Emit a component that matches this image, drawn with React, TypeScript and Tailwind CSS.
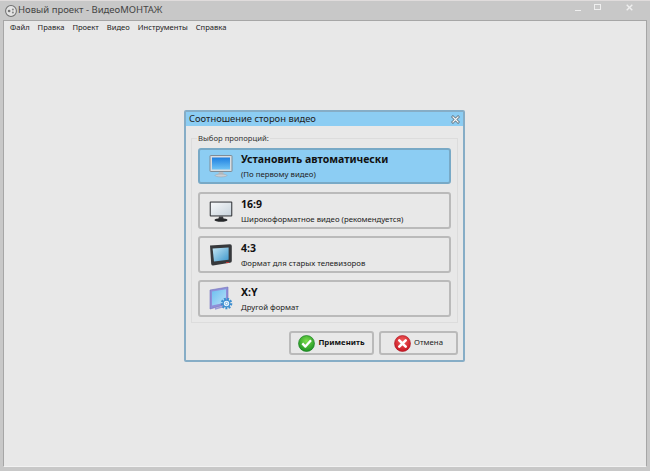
import React from "react";

const FONT = "font-['Liberation_Sans',Arial,sans-serif]";
const UI = "font-['Noto_Sans',sans-serif]";

function AppLogo() {
  return (
    <svg width="12" height="12" viewBox="0 0 14 14" className="shrink-0">
      <circle cx="7" cy="7" r="6.3" fill="#e4e4e4" stroke="#6f6f6f" strokeWidth="1.2" />
      <circle cx="4.8" cy="7" r="1.6" fill="#777" />
      <circle cx="9.2" cy="5.2" r="1.2" fill="#888" />
      <circle cx="9.2" cy="8.8" r="1.2" fill="#888" />
    </svg>
  );
}

function MonitorBlue() {
  return (
    <svg width="24" height="24" viewBox="0 0 24 24">
      <defs>
        <linearGradient id="mb" x1="0" y1="0" x2="0" y2="1">
          <stop offset="0" stopColor="#1e7fe0" />
          <stop offset="1" stopColor="#6fc4f6" />
        </linearGradient>
      </defs>
      <rect x="1" y="1.5" width="22" height="16" rx="0.5" fill="#d8dde2" stroke="#7f8c96" />
      <rect x="3" y="3.5" width="18" height="12" fill="url(#mb)" />
      <path d="M10 18h4l1 2.5H9z" fill="#b5bcc2" />
      <ellipse cx="12" cy="21.5" rx="6" ry="1.4" fill="#c9ced3" stroke="#98a1a8" strokeWidth="0.5" />
    </svg>
  );
}

function MonitorWide() {
  return (
    <svg width="24" height="24" viewBox="0 0 24 24">
      <defs>
        <linearGradient id="mw" x1="0" y1="0" x2="1" y2="1">
          <stop offset="0" stopColor="#f6f8fa" />
          <stop offset="1" stopColor="#c8d3dc" />
        </linearGradient>
      </defs>
      <rect x="0.7" y="2.5" width="22.6" height="15" rx="1" fill="#3a3c40" />
      <rect x="1.8" y="3.6" width="20.4" height="12.8" fill="url(#mw)" />
      <path d="M10 17.5h4l.6 2.5H9.4z" fill="#3a3c40" />
      <ellipse cx="12" cy="21" rx="6.5" ry="1.7" fill="#26282b" />
    </svg>
  );
}

function OldTv() {
  return (
    <svg width="24" height="24" viewBox="0 0 24 24">
      <defs>
        <linearGradient id="tv" x1="0" y1="0" x2="1" y2="1">
          <stop offset="0" stopColor="#c5e6f4" />
          <stop offset="1" stopColor="#3d97cc" />
        </linearGradient>
      </defs>
      <path d="M1 2.5 21 1.2q1.8 0 1.8 1.8v15q0 1.6-1.8 1.8L4 22.5q-1.5 0-1.8-1.5z" fill="#37393c" />
      <path d="M3.6 5.4 19.6 4.4v12.4L5 18.6z" fill="url(#tv)" />
      <rect x="17" y="19" width="3" height="1" fill="#b33" />
    </svg>
  );
}

function FormatCustom() {
  return (
    <svg width="24" height="26" viewBox="0 0 24 26">
      <defs>
        <linearGradient id="fc" x1="0" y1="0" x2="1" y2="1">
          <stop offset="0" stopColor="#6cc0f0" />
          <stop offset="1" stopColor="#b8e0f8" />
        </linearGradient>
      </defs>
      <path d="M1 4 19 1v17L1 23z" fill="#8f8fd8" stroke="#7272bc" strokeWidth="0.6" />
      <path d="M3 5.6 17 3.2v13.2L3 19.6z" fill="url(#fc)" />
      <path d="M6 22l8-2v1.5l-8 2.3z" fill="#9a9ad8" />
      <circle cx="17.5" cy="17.5" r="4.6" fill="none" stroke="#3d8fd0" strokeWidth="2.4" strokeDasharray="1.9 1.2" />
      <circle cx="17.5" cy="17.5" r="3.3" fill="#e8f4fc" stroke="#3d8fd0" strokeWidth="1.2" />
      <circle cx="17.5" cy="17.5" r="1.2" fill="#fff" stroke="#3d8fd0" strokeWidth="0.6" />
    </svg>
  );
}

function ApplyIcon() {
  return (
    <svg width="17" height="17" viewBox="0 0 17 17">
      <defs>
        <radialGradient id="ok" cx="0.5" cy="0.35" r="0.7">
          <stop offset="0" stopColor="#7ee04e" />
          <stop offset="1" stopColor="#148a1e" />
        </radialGradient>
      </defs>
      <circle cx="8.5" cy="8.5" r="8" fill="url(#ok)" stroke="#0e7a1a" strokeWidth="0.6" />
      <path d="M4.3 8.4 7.4 11.6 13 5.2" fill="none" stroke="#fff" strokeWidth="2.3" strokeLinejoin="round" />
    </svg>
  );
}

function CancelIcon() {
  return (
    <svg width="17" height="17" viewBox="0 0 17 17">
      <defs>
        <radialGradient id="no" cx="0.5" cy="0.35" r="0.7">
          <stop offset="0" stopColor="#f4605e" />
          <stop offset="1" stopColor="#c20f1c" />
        </radialGradient>
      </defs>
      <circle cx="8.5" cy="8.5" r="8" fill="url(#no)" stroke="#ac1220" strokeWidth="0.6" />
      <path d="M5.3 5.3 11.7 11.7M11.7 5.3 5.3 11.7" stroke="#fff" strokeWidth="2.6" strokeLinecap="round" />
    </svg>
  );
}

type Option = {
  title: string;
  note: string;
  icon: React.ReactNode;
  active?: boolean;
  height: string;
  gap: string;
};

const OPTIONS: Option[] = [
  {
    title: "Установить автоматически",
    note: "(По первому видео)",
    icon: <MonitorBlue />,
    active: true,
    height: "h-[36px]",
    gap: "",
  },
  { title: "16:9", note: "Широкоформатное видео (рекомендуется)", icon: <MonitorWide />, height: "h-[37px]", gap: "mt-[8px]" },
  { title: "4:3", note: "Формат для старых телевизоров", icon: <OldTv />, height: "h-[37px]", gap: "mt-[7px]" },
  { title: "X:Y", note: "Другой формат", icon: <FormatCustom />, height: "h-[37px]", gap: "mt-[7px]" },
];

function OptionRow({ option }: { option: Option }) {
  return (
    <div
      className={`flex items-center rounded-[3px] border-2 pl-[9px] ${option.height} ${option.gap} ${
        option.active ? "border-[#78a9c6] bg-[#8ccdf3]" : "border-[#bababa] bg-[#e8e8e8]"
      }`}
    >
      <div className="flex w-[24px] shrink-0 justify-center">{option.icon}</div>
      <div className="ml-[8px] flex flex-col text-[#111]">
        <span className={`${UI} text-[10.5px] font-bold leading-[14px]`}>{option.title}</span>
        <span className={`${UI} mt-[3px] text-[7.8px] leading-[11px] text-[#222]`}>{option.note}</span>
      </div>
    </div>
  );
}

export default function App() {
  return (
    <div className={`${FONT} relative flex h-[471px] w-[650px] flex-col overflow-hidden bg-[#c8c8c8]`}>
      <div className="flex h-[20px] shrink-0 items-center justify-between border-t border-[#e0dcdc] pl-[5px] pr-[17px]">
        <div className="flex items-center gap-[1px]">
          <AppLogo />
          <span className={`${UI} text-[9.5px] text-[#444]`}>Новый проект - ВидеоМОНТАЖ</span>
        </div>
        <div className="flex items-start gap-[13px] pb-[6px]">
          <div className="mt-[6px] h-[1px] w-[6px] bg-[#f0f0f0]" />
          <div className="h-[6px] w-[7px] border border-[#efefef]" />
          <svg width="7" height="7" viewBox="0 0 10 10" className="ml-[12px]">
            <path d="M1 1 9 9M9 1 1 9" stroke="#efefef" strokeWidth="2" />
          </svg>
        </div>
      </div>
      <div className="mx-[3px] mb-[4px] flex min-h-0 flex-1 flex-col border border-[#a6a6a6] border-b-[#f2f2f2] bg-[#e8e8e8]">
        <div className={`${UI} flex h-[14px] items-center gap-[8px] pl-[6px] text-[7.6px] text-[#222]`}>
          <span>Файл</span>
          <span>Правка</span>
          <span>Проект</span>
          <span>Видео</span>
          <span>Инструменты</span>
          <span>Справка</span>
        </div>
      </div>

      <div className="absolute left-[184px] top-[110px] flex h-[252px] w-[281px] flex-col rounded-[2px] border-2 border-[#86adc6] bg-[#e8e8e8]">
        <div className="flex h-[14px] shrink-0 items-center justify-between bg-[#8ccdf3] pl-[3px] pr-[3px]">
          <span className={`${UI} text-[9.4px] text-[#222]`}>Соотношение сторон видео</span>
          <svg width="9" height="9" viewBox="0 0 9 9">
            <path d="M1 1 8 8M8 1 1 8" stroke="#5a6a74" strokeWidth="2.6" />
            <path d="M1.5 1.5 7.5 7.5M7.5 1.5 1.5 7.5" stroke="#f4f8fa" strokeWidth="1.2" />
          </svg>
        </div>
        <div className="relative mx-[5px] mt-[12px] h-[185px] shrink-0 border border-[#dcdcdc] px-[6px] pt-[9px]">
          <span className={`${UI} absolute -top-[6px] left-[5px] bg-[#e8e8e8] px-[1px] text-[7.7px] leading-[11px] text-[#333]`}>
            Выбор пропорций:
          </span>
          {OPTIONS.map((option) => (
            <OptionRow key={option.title} option={option} />
          ))}
        </div>
        <div className="mr-[5px] mt-[8px] flex justify-end gap-[5px]">
          <button className="flex h-[24px] w-[85px] items-center justify-center gap-[3px] rounded-[3px] border-2 border-[#bababa] bg-[#e8e8e8]">
            <ApplyIcon />
            <span className={`${UI} text-[7.8px] font-bold text-[#111]`}>Применить</span>
          </button>
          <button className="flex h-[24px] w-[79px] items-center justify-center gap-[3px] rounded-[3px] border-2 border-[#bababa] bg-[#e8e8e8]">
            <CancelIcon />
            <span className={`${UI} text-[7.8px] text-[#222]`}>Отмена</span>
          </button>
        </div>
      </div>
    </div>
  );
}
